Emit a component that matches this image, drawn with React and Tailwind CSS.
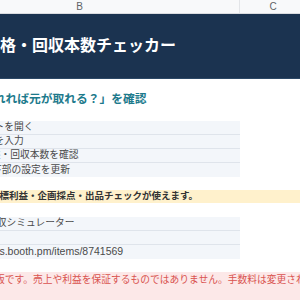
const steps = [
  { text: "シートを開く", pad: "pl-[55px]" },
  { text: "価格を入力", pad: "pl-[55px]" },
  { text: "利益・回収本数を確認", pad: "pl-[61px]" },
  { text: "下部の設定を更新", pad: "pl-[72px]" },
];

function Cell({ children, className = "" }) {
  return <div className={`flex w-[320px] shrink-0 items-center ${className}`}>{children}</div>;
}

export default function App() {
  return (
    <div className="h-[300px] w-[300px] overflow-hidden bg-white font-['Liberation_Sans','Noto_Sans_CJK_JP',sans-serif]">
      <div className="ml-[-80px] flex w-[386px] flex-col">
        {/* column headers */}
        <div className="flex h-[14px] border-b border-[#dadce0] bg-[#f8f9fa] text-[10px] text-[#5f6368]">
          <div className="flex w-[320px] items-center justify-center border-r border-[#e3e5e8]">B</div>
          <div className="flex w-[66px] items-center justify-center">C</div>
        </div>

        {/* title banner */}
        <div className="flex h-[65px] items-center border-b border-[#2c4866] bg-[#1b3350]">
          <h1 className="pl-[32px] text-[16px] font-bold whitespace-nowrap text-white">
            販売価格・回収本数チェッカー
          </h1>
        </div>

        {/* subtitle */}
        <div className="flex h-[42px] items-center pb-[3px]">
          <p className="pl-[15px] text-[11.75px] font-bold whitespace-nowrap text-[#1d7a8c]">
            「いくら売れれば元が取れる？」を確認
          </p>
        </div>

        {/* steps */}
        <div className="flex flex-col">
          {steps.map((s, i) => (
            <div key={i} className="flex">
              <Cell className={`h-[14px] bg-[#f3f6fa] text-[9.75px] text-[#4a4a4a] ${i < 3 ? "border-b border-[#dfe4eb]" : ""} ${s.pad}`}>
                <span className="whitespace-nowrap">{s.text}</span>
              </Cell>
            </div>
          ))}
        </div>

        {/* notice */}
        <div className="mt-[13px] flex h-[13px] items-center bg-[#fff1cc] pl-[70px] text-[9.5px] font-bold whitespace-nowrap text-[#333]">
          目標利益・企画採点・出品チェックが使えます。
        </div>

        {/* info table */}
        <div className="mt-[14px] flex flex-col">
          <div className="flex">
            <Cell className="h-[14px] border-b border-[#dfe4eb] bg-[#f3f6fa] pl-[67px] text-[9.75px] text-[#4a4a4a]">
              <span className="whitespace-nowrap">回収シミュレーター</span>
            </Cell>
          </div>
          <div className="flex">
            <Cell className="h-[14px] border-b border-[#dfe4eb] bg-[#f3f6fa]" />
          </div>
          <div className="flex">
            <Cell className="h-[14px] bg-[#f3f6fa] pl-[31px] text-[10.5px] text-[#4a4a4a]">
              <span className="whitespace-nowrap">https://tools.booth.pm/items/8741569</span>
            </Cell>
          </div>
        </div>

        {/* disclaimer */}
        <div className="mt-[13px] h-[30px] bg-[#fce8e8] pt-[1px] pl-[36px] text-[9.75px] leading-[14px] whitespace-nowrap text-[#d9534f]">
          簡易試算版です。売上や利益を保証するものではありません。手数料は変更される場合があります。
        </div>
      </div>
    </div>
  );
}
